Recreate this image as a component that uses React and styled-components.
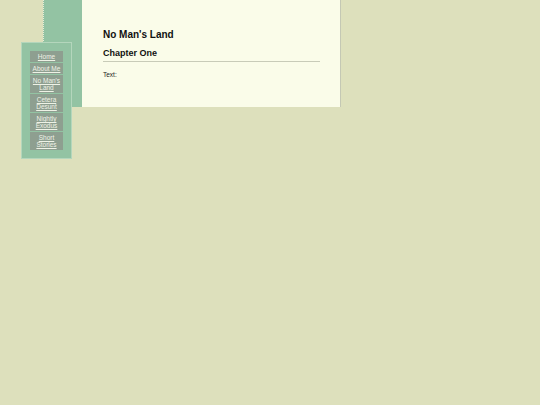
import React from "react"
import styled, { createGlobalStyle } from "styled-components"

const GlobalStyle = createGlobalStyle`
    html, body {
        margin: 0;
        padding: 0;
        background-color: #dde0bc;
        font-family: "Liberation Sans", Arial, sans-serif;
    }
`

const Page = styled.div`
    position: relative;
    min-height: 405px;
`

const Column = styled.div`
    margin-left: 43px;
    width: fit-content;
    display: flex;
    background-color: #93c3a3;
    border-left: 1px dotted #e8ecd8;
    padding-left: 38px;
`

const Content = styled.div`
    width: 217px;
    height: 107px;
    padding: 0 20px 0 21px;
    box-sizing: content-box;
    background-color: #fafce9;
    border-right: 1px solid #c4c8b4;
`

const Title = styled.h1`
    margin: 0;
    padding-top: 29px;
    font-size: 10px;
    line-height: 11px;
    font-weight: bold;
    color: #111;
`

const Chapter = styled.h2`
    margin: 8px 0 0;
    padding-bottom: 2px;
    font-size: 9px;
    line-height: 11px;
    font-weight: bold;
    color: #111;
    border-bottom: 1px solid #c8cbb8;
`

const Paragraph = styled.p`
    margin: 9px 0 0;
    font-size: 6.5px;
    line-height: 8px;
    color: #222;
`

const Sidebar = styled.nav`
    position: absolute;
    left: 21px;
    top: 42px;
    width: 33px;
    padding: 8px;
    background-color: #93c3a3;
    border: 1px solid #b4d6bc;
    display: flex;
    flex-direction: column;
    gap: 1px;
`

const MenuItem = styled.a`
    display: block;
    background-color: #8e9f90;
    color: #eef2e6;
    text-align: center;
    font-size: 6.5px;
    line-height: 7px;
    padding: 2px 0;
    text-decoration: underline;
`

const links = ["Home", "About Me", "No Man's Land", "Cetera Desunt", "Nightly Exodus", "Short Stories"]

const App = () => {
    return (
        <Page>
            <GlobalStyle />
            <Column>
                <Content>
                    <Title>No Man's Land</Title>
                    <Chapter>Chapter One</Chapter>
                    <Paragraph>Text:</Paragraph>
                </Content>
            </Column>
            <Sidebar>
                {links.map(l => <MenuItem key={l} href="#">{l}</MenuItem>)}
            </Sidebar>
        </Page>
    )
}

export default App
